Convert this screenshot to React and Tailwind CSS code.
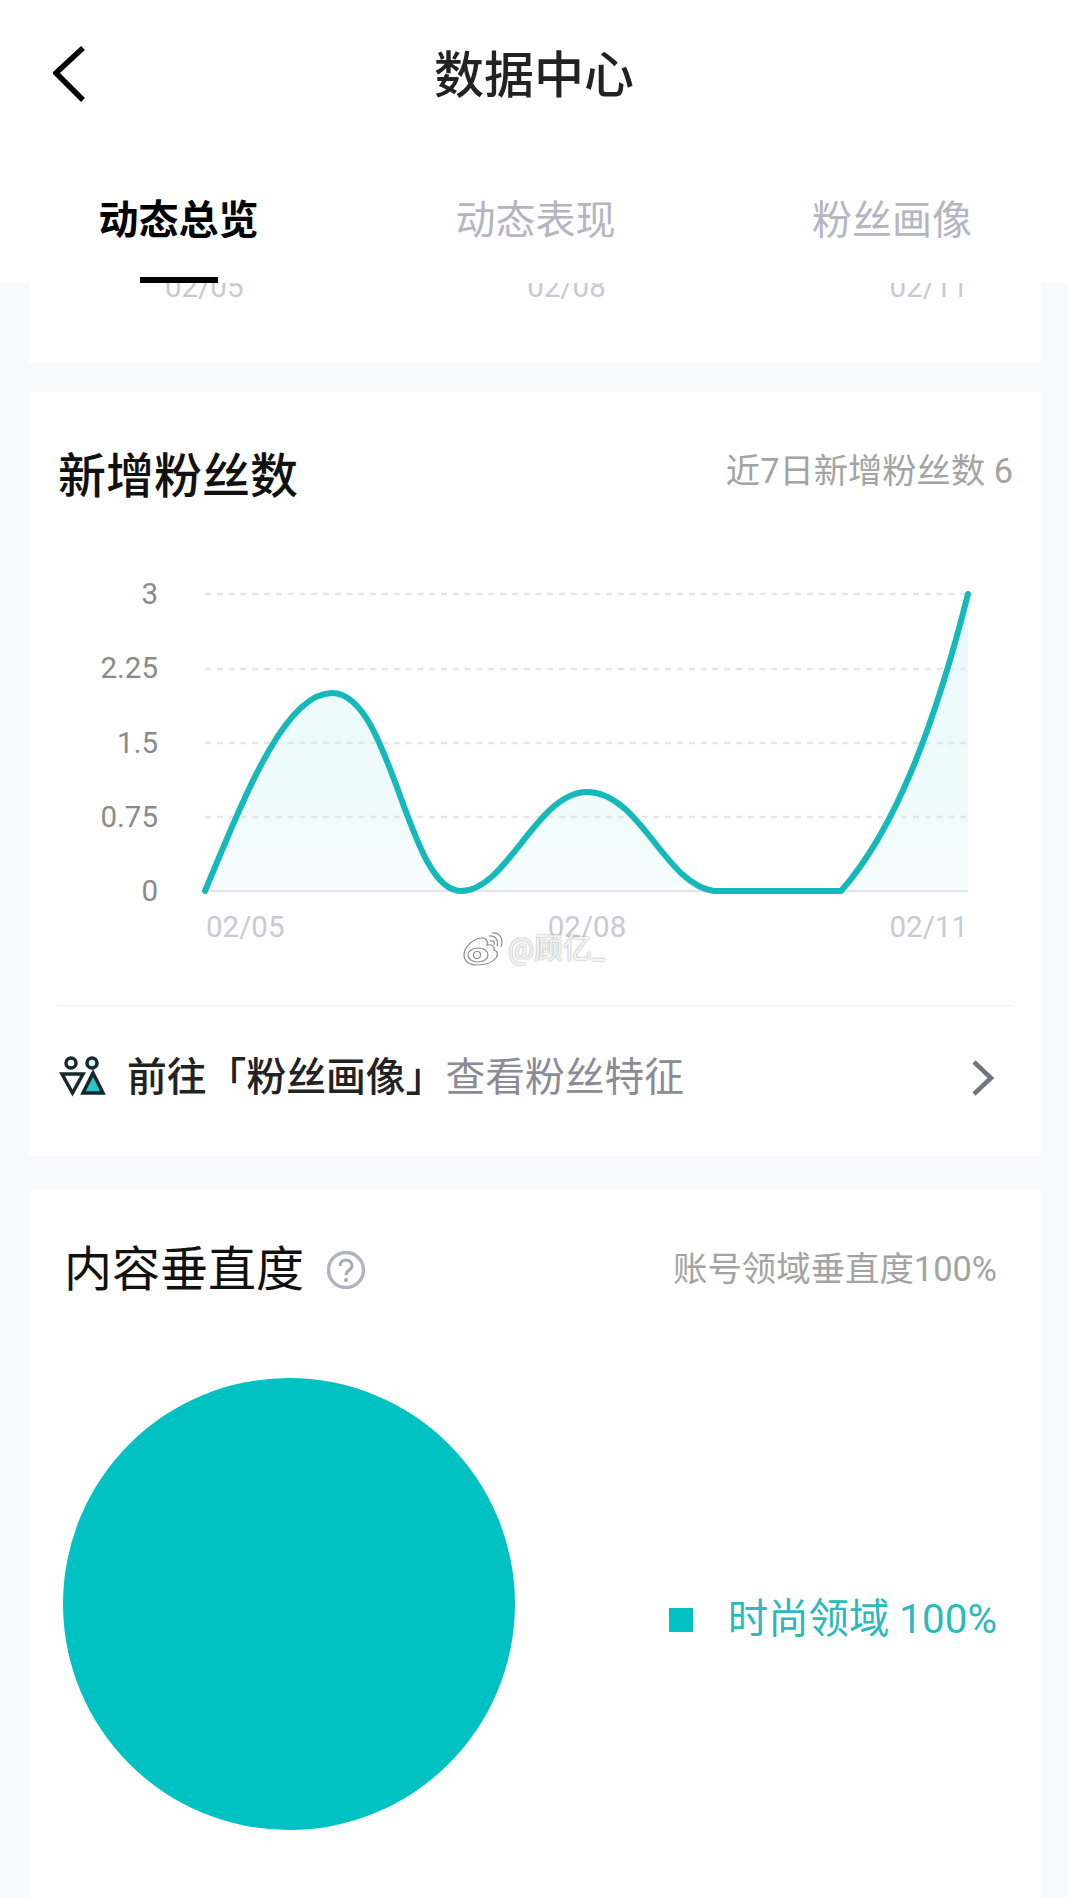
import React from 'react';

const tabs = ['动态总览', '动态表现', '粉丝画像'];
const yLabels = ['3', '2.25', '1.5', '0.75', '0'];
const dates = ['02/05', '02/08', '02/11'];
const gridYs = [594, 669, 743, 817];
const curve = 'M205 891 C245 795 285 693 332 693 C392 693 407 891 461 891 C507 891 537 792 587 792 C640 792 665 885 714 891 L841 891 C895 830 935 725 968 594';

const DateRow = ({ className }) => (
    <div className={`flex justify-between text-[29.5px] leading-[40px] text-[#c9c9d3] ${className}`}>
        {dates.map(d => <span key={d}>{d}</span>)}
    </div>
);

const BackIcon = () => (
    <svg className="ml-[53px] -mt-[5px]" width="32" height="56" viewBox="0 0 32 56" fill="none" stroke="#000" strokeWidth="5.5">
        <path d="M30 2 L3 27 L30 54" />
    </svg>
);

const RowChevron = () => (
    <svg className="ml-auto" width="24" height="36" viewBox="0 0 24 36" fill="none" stroke="#74747c" strokeWidth="4.5">
        <path d="M3 2 L20 18 L3 34" />
    </svg>
);

const FansIcon = () => (
    <svg width="48" height="44" viewBox="60 1054 48 44" fill="none" stroke="#16282a" strokeWidth="3.5" strokeLinejoin="miter">
        <circle cx="72" cy="1061" r="5" />
        <circle cx="93" cy="1061" r="5" fill="#d9f3f3" />
        <path d="M63 1072 H84 L73.5 1091 Z" />
        <path d="M94 1071 L104 1091 H84 Z" fill="#2cc2c4" />
    </svg>
);

const WeiboMark = () => (
    <svg width="42" height="34" viewBox="0 0 42 34" fill="#fff" stroke="#8c8c8c" strokeWidth="1.2">
        <path d="M2 23 C2 14 13 6 20 6 C25 6 26 10 25 13 C30 12 33 14 32 18 C36 19 36 23 34 26 C30 31 22 33 15 33 C7 33 2 29 2 23 Z" />
        <ellipse cx="16" cy="23" rx="10" ry="7" />
        <circle cx="15" cy="23" r="3.5" />
        <path d="M27 4 C33 3 37 8 35 14" fill="none" />
        <path d="M28 9 C31 8 33 10 32 13" fill="none" />
        <path d="M30 1 C37 0 42 6 39 15" fill="none" />
    </svg>
);

const App = () => {
    return (
        <div className="relative h-[1898px] w-[1068px] overflow-hidden bg-[#f8f9fb] [font-family:Roboto,'Noto_Sans_CJK_SC',sans-serif]">
            <header className="relative z-10 h-[283px] bg-white pt-[46px]">
                <div className="grid h-[60px] grid-cols-[1fr_auto_1fr] items-center">
                    <BackIcon />
                    <h1 className="text-[50px] leading-[60px] font-medium text-[#222222]">数据中心</h1>
                </div>
                <nav className="mt-[85px] grid h-[92px] grid-cols-[357px_357px_354px]">
                    {tabs.map((tab, i) => (
                        <div key={tab} className="flex flex-col items-center">
                            <span className={`whitespace-nowrap text-[40px] leading-[60px] ${i === 0 ? 'font-bold text-black' : 'text-[#b5b5c1]'} ${i === 2 ? 'translate-x-[1px]' : ''}`}>{tab}</span>
                            {i === 0 && <span className="mt-auto h-[6px] w-[78px] bg-black" />}
                        </div>
                    ))}
                </nav>
            </header>

            <main className="ml-[29px] mr-[27px]">
                <section className="flow-root h-[80px] bg-white">
                    <DateRow className="-mt-[16px] pl-[136px] pr-[73px]" />
                </section>

                <section className="mt-[29px] bg-white pb-[6px] pt-[50px]">
                    <div className="flex h-[60px] items-center justify-between pl-[29px] pr-[28px]">
                        <h2 className="mt-[9px] text-[48px] font-medium text-[#111111]">新增粉丝数</h2>
                        <span className="text-[34.3px] text-[#a3a3a3]">近7日新增粉丝数 6</span>
                    </div>

                    <div className="mt-[55px] flex h-[350px] items-start pl-[29px]">
                        <div className="w-[100px] shrink-0 text-[29.5px] text-[#8a8a8a]">
                            {yLabels.map(label => (
                                <div key={label} className="flex h-[74.25px] items-center justify-end">{label}</div>
                            ))}
                        </div>
                        <svg className="ml-[37px] shrink-0" width="790" height="350" viewBox="195 557 790 350" fill="none">
                            <defs>
                                <linearGradient id="area" x1="0" y1="0" x2="0" y2="1">
                                    <stop offset="0" stopColor="#e7f9f9" />
                                    <stop offset="1" stopColor="#f5fcfc" />
                                </linearGradient>
                            </defs>
                            <path d={`${curve} V891 Z`} fill="url(#area)" />
                            {gridYs.map(y => (
                                <line key={y} x1="205" x2="968" y1={y} y2={y} stroke="#e6e6e9" strokeWidth="2.5" strokeDasharray="6 5.8" />
                            ))}
                            <line x1="205" x2="968" y1="891" y2="891" stroke="#e6e6ea" strokeWidth="2.5" />
                            <path d={curve} stroke="#15b9b9" strokeWidth="6" strokeLinecap="round" strokeLinejoin="round" />
                        </svg>
                    </div>
                    <DateRow className="pl-[177px] pr-[73px]" />

                    <div className="mx-[29px] mt-[58px] h-px bg-[#f2f2f4]" />
                    <div className="flex h-[144px] items-center pl-[30px] pr-[46px]">
                        <FansIcon />
                        <span className="ml-[20px] text-[39.8px] font-medium text-[#222222]">前往「粉丝画像」</span>
                        <span className="text-[39.8px] text-[#8b8b95]">查看粉丝特征</span>
                        <RowChevron />
                    </div>
                </section>

                <section className="mt-[34px] h-[720px] rounded-t-[4px] bg-white pt-[50px]">
                    <div className="flex h-[60px] items-center pl-[35px] pr-[44px]">
                        <h2 className="text-[48px] text-[#111111]">内容垂直度</h2>
                        <svg className="ml-[23px]" width="38" height="38" viewBox="0 0 38 38" fill="none">
                            <circle cx="19" cy="19" r="17.5" stroke="#b3b3bf" strokeWidth="3.5" />
                            <path d="M13 15 C13 7 25 7 25 15 C25 19 19 19 19 24" stroke="#a6a6b2" strokeWidth="3" />
                            <circle cx="19" cy="29" r="2" fill="#a6a6b2" />
                        </svg>
                        <span className="ml-auto text-[34.4px] text-[#a3a3a3]">账号领域垂直度100%</span>
                    </div>

                    <div className="mt-[78px] flex items-center pl-[34px] pr-[44px]">
                        <div className="h-[452px] w-[452px] rounded-full bg-[#00c2c2]" />
                        <div className="ml-auto mt-[32px] flex items-center">
                            <span className="h-[24px] w-[24px] bg-[#00c0c4]" />
                            <span className="ml-[35px] text-[40.4px] text-[#2bb9bd]">时尚领域 100%</span>
                        </div>
                    </div>
                </section>
            </main>

            <div className="absolute left-[462px] top-[932px] flex items-center gap-[4px]">
                <WeiboMark />
                <span className="text-[29px] leading-[34px] text-[#f4f4f4] [text-shadow:0_0_2px_#8f8f8f]">@顾亿_</span>
            </div>
        </div>
    );
};

export default App;
